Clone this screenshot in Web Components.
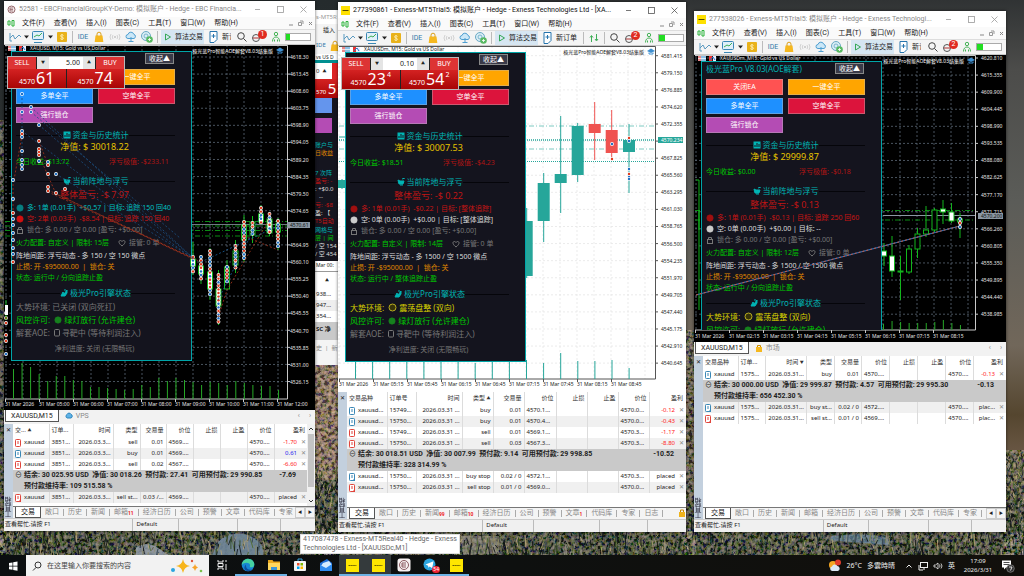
<!DOCTYPE html>
<html lang="zh-CN">
<head>
<meta charset="utf-8">
<title>Desktop</title>
<style>
html,body{margin:0;height:100%;overflow:hidden;background:#202423}
body{font-family:"Noto Sans","Noto Sans CJK SC",sans-serif;font-size:6px;line-height:11px;color:#222;--ui:Roboto,"Noto Sans CJK SC",sans-serif}
</style>
</head>
<body>
<desk-top>
  <desk-wallpaper slot="wallpaper"></desk-wallpaper>
  <mt-sliver slot="windows" class="back"></mt-sliver>
  <mt-window slot="windows" class="one" account="ebc"></mt-window>
  <mt-window slot="windows" class="two" account="exA"></mt-window>
  <mt-window slot="windows" class="three" account="exB"></mt-window>
  <task-tip slot="windows" class="tip">417087478 - Exness-MT5Real40 - Hedge - Exness<br>Technologies Ltd - [XAUUSDc,M1]</task-tip>
  <task-bar slot="bar"></task-bar>
</desk-top>
<script>
const BASE = `<style>
*{box-sizing:border-box}
button,input{font:inherit;color:inherit;background:none;border:0;padding:0;margin:0;outline:0;line-height:inherit;min-width:0}
button{white-space:nowrap}
svg{display:block;flex:none}
</style>`;
function define(name, render){
  customElements.define(name, class extends HTMLElement{
    connectedCallback(){
      if(this.shadowRoot) return;
      const t=document.createElement('template');
      t.innerHTML=BASE+render(this);
      this.attachShadow({mode:'open'}).append(t.content.cloneNode(true));
    }
  });
}
function random(seed){return ()=>{seed=(seed*1664525+1013904223)%4294967296;return seed/4294967296}}
const svg=(w,h,body,vb)=>`<svg width="${w}" height="${h}" viewBox="${vb||`0 0 ${w} ${h}`}" fill="none" aria-hidden="true">${body}</svg>`;

const ICON={
  line:svg(12,12,'<path d="M1 2v8h2M1 7l3-3 2 4 4-4 2 2" stroke="#5a9ac0"/>'),
  box:svg(14,14,'<rect x="1.5" y="1.5" width="11" height="8" rx="1" fill="#dff0fa" stroke="#3a87b5"/><path d="M3 7l3-2 2 1 3-3" stroke="#3fae57"/><path d="M3 12.5h8" stroke="#3a87b5"/>'),
  coin:svg(14,14,'<rect x="2" y="2" width="10" height="10" rx="1" fill="#e9b21a"/><path d="M8.500 5.500c-1-1.200-3-.8-3 .5s3 .8 3 2.200-2.500 1.600-3.200.3M7 4v6" stroke="#fff3c0" stroke-width=".8"/>'),
  bag:svg(14,14,'<path d="M3.500 5.500h7l.8 6.500H2.700z" fill="#f5b81f"/><path d="M5 6V4.200a2 2 0 014 0V6" stroke="#dba019"/>'),
  signal:svg(14,14,'<circle cx="7" cy="7" r="1" fill="#c5c5c5"/><path d="M5 5q-1.500 2 0 4M9 5q1.500 2 0 4M3 4q-2 3 0 6M11 4q2 3 0 6" stroke="#c9c9c9" stroke-width=".8"/>'),
  cloud:svg(14,14,'<path d="M4 8.500a2 2 0 010-4 3 3 0 015.800-.2A2.200 2.200 0 0110 8.500z" fill="#cbe7f7" stroke="#4f9fd0"/><path d="M7 7v4M4.500 11.500h5" stroke="#4f9fd0"/>'),
  globe:svg(14,14,'<circle cx="6" cy="6" r="4.500" fill="#d9edf5" stroke="#6aa9c4"/><circle cx="6" cy="6" r="2" stroke="#6aa9c4" stroke-width=".8"/><circle cx="9.500" cy="9.500" r="3.300" fill="#58b962"/><path d="M9.500 8v3M8 9.500h3" stroke="#fff" stroke-width=".8"/>'),
  play:svg(8,8,'<path d="M1.500 1l5 3-5 3z" stroke="#35a857"/>'),
  doc:svg(14,14,'<path d="M4 1.500h7v8l-3 3H4z" fill="#fff" stroke="#2674ad"/><path d="M7.500 4v4M5.500 6h4" stroke="#2674ad"/>'),
  arrows:svg(14,14,'<path d="M4.500 11V5M3 6.500L4.500 4.500 6 6.500M9.500 3v6M8 8l1.500 2L11 8" stroke="#3fae57"/>'),
  search:svg(14,14,'<circle cx="6" cy="6" r="3.300" stroke="#444"/><path d="M8.500 8.500l3 3" stroke="#444"/>'),
  person:svg(14,14,'<circle cx="7" cy="4" r="1.700" stroke="#45b356"/><path d="M3.500 11.500c0-3 1.500-4.500 3.500-4.500s3.500 1.500 3.500 4.500M5.500 11.500v-2M8.500 11.500v-2" stroke="#45b356"/>'),
  caret:svg(6,4,'<path d="M1 .5h5L3.500 3.500z" fill="#222"/>'),
  cap:svg(8,7,'<path d="M0 3l4-2.500L8 3 4 5z" fill="#3f8fd0"/><path d="M2 4.500v1.500h4V4.500" stroke="#3f8fd0"/>'),
  flags:svg(20,7,'<path d="M1 1h3v5H1z" fill="#e88"/><path d="M4 1h5v5H4z" fill="#8bc0e6"/><path d="M1 3.500h8" stroke="#fff" stroke-width=".7"/><path d="M12 1h3v5h-3z" fill="#e33"/><path d="M16 1h3v5h-3z" fill="#eef"/><path d="M13 5l3-3 2 3" stroke="#2674c4"/>')
};

const AXIS=(from,step,n,d)=>Array.from({length:n},(_,i)=>(from-step*i).toFixed(d));
const ACC={
 ebc:{
  title:'52581 - EBCFinancialGroupKY-Demo: 模拟账户 - Hedge - EBC Financia...',active:false,logo:'ebc',neworder:'新订单',compact:true,badge:1,
  x:4,y:45,w:311,h:365,border:287.5,base:399,dark:true,
  axis:AXIS(4618.30,4.85,20,2),axisPad:'9px 0 14px',tag:['4570.61',177],covered:10,tagBg:'#8b97a3',tagFg:'#111',
  dates:['31 Mar 2026','31 Mar 05:00','31 Mar 06:00','31 Mar 07:00','31 Mar 08:00','31 Mar 09:00','31 Mar 10:00','31 Mar 11:00','31 Mar 12:00'],datePad:'0 4px 0 1px',
  sym:'XAUUSD, M15: Gold vs US Dollar',tab:['XAUUSD,M15','VPS','cloud'],
  trade:{lot:'5.00',s:['4570','61',''],b:['4570','74','']},
  panel:{net:'30018.22',day:'$13.72',dd:'-$233.11',all:'-$ 7.97',
   long:['#00c0c0','#087f80','多: 1单 (0.01手)  +$0.57 | 目标: 追踪 150 回40'],short:['#c81414','#d01010','空: 2单 (0.03手)  -$8.54 | 目标: 追踪 150 回40'],
   lim:15,gap:'150',mode:'分向追踪止盈',env:['#777','已关闭 (双向死扛)',false]},
  cols:[36,24,40,27,26,27,27,27,27,34],scroll:true,list:82,
  heads:['交... ▲','订单...','时间','类型','交易量','价位','止损','止盈','价位','盈利'],
  rows:[['sell','xauusd','3851...','2026.03.3...','sell','0.01','4569....','4570....','-1.70'],['buy','xauusd','3851...','2026.03.3...','buy','0.01','4569....','4570....','0.61'],['sell','xauusd','3851...','2026.03.3...','sell','0.02','4567....','4570....','-6.60'],
   ['结余: 30 025.95 USD  净值: 30 018.26  预付款: 27.41  可用预付款: 29 990.85','预付款维持率: 109 515.58 %','-7.69'],
   ['sellp','xauusd','3851...','2026.03.3...','sell st...','0.03 /...','4569....','4570....','placed']],
  tabs:['交易','敞口','历史','新闻','邮箱:11','经济日历','公司','预警','文章','代码库','专家'],arrows:true
 },
 exA:{
  title:'277390861 - Exness-MT5Trial5: 模拟账户 - Hedge - Exness Technologies Ltd - [XA...',active:true,logo:'ex',neworder:'新订单',badge:2,
  x:338,y:46,w:348,h:346,border:655.5,base:379,dark:false,
  axis:AXIS(4581.415,2.265,19,3),axisPad:'7px 0 13px',tag:['4570.234',91],covered:5,tagBg:'#26a69a',tagFg:'#fff',
  dates:['31 Mar 2026','31 Mar 05:15','31 Mar 05:45','31 Mar 06:15','31 Mar 06:45','31 Mar 07:15','31 Mar 07:45','31 Mar 08:15','31 Mar 08:45'],datePad:'0 41px 0 1px',
  sym:'XAUUSDm, M15: Gold vs US Dollar',
  trade:{lot:'0.10',s:['4570','23','4'],b:['4570','54','2']},
  panel:{net:'30007.53',day:'$18.51',dd:'-$4.23',all:'-$ 0.22',
   long:['#c81414','#a01010','多: 1单 (0.01手)  -$0.22 | 目标: [整体追踪]'],short:['#ddd','#ccc','空: 0单 (0.00手)  +$0.00 | 目标: [整体追踪]'],
   lim:14,gap:'1500',mode:'整体追踪止盈',env:['#d8d000','震荡盘整 (双向)',true]},
  cols:[40,29,46,31,31,32,31,31,31,37],list:115,
  heads:['交易品种','订单号','时间','类型  ▲','交易量','价位','止损','止盈','价位','盈利'],
  rows:[['buy','xauusd...','15749...','2026.03.31 ...','buy','0.01','4570.1...','4570.0...','-0.12'],['buy','xauusd...','15750...','2026.03.31 ...','buy','0.01','4570.4...','4570.0...','-0.43'],['sell','xauusd...','15749...','2026.03.31 ...','sell','0.01','4569.1...','4570.3...','-1.17'],['sell','xauusd...','15750...','2026.03.31 ...','sell','0.03','4567.3...','4570.3...','-8.80'],
   ['结余: 30 018.51 USD  净值: 30 007.99  预付款: 9.14  可用预付款: 29 998.85','预付款维持率: 328 314.99 %','-10.52'],
   ['buyp','xauusd...','15750...','2026.03.31 ...','buy stop','0.02 / 0','4572.1...','4570.3...','placed'],['sellp','xauusd...','15750...','2026.03.31 ...','sell stop','0.01 / 0','4569.0...','4570.0...','placed']],
  tabs:['交易','敞口','历史','新闻:99','邮箱:10','经济日历','公司','预警','文章:1','代码库','专家','日志'],lock:true
 },
 exB:{
  title:'277538026 - Exness-MT5Trial5: 模拟账户 - Hedge - Exness Technologi...',active:false,logo:'ex',neworder:'新订单',compact:true,badge:2,
  x:694,y:55,w:312,h:287,border:975.5,base:330,dark:true,
  axis:AXIS(4620.810,5.455,16,3),axisPad:'0 0 13px',tag:['4570.200',158],tagBg:'#8b97a3',tagFg:'#111',
  dates:['31 Mar 2026','31 Mar 02:15','31 Mar 03:15','31 Mar 04:15','31 Mar 05:15','31 Mar 06:15','31 Mar 07:15','31 Mar 08:15'],datePad:'0 39px 0 1px',
  sym:'XAUUSDm, M15: Gold vs US Dollar',tab:['XAUUSD,M15','市场','bag'],
  panel:{net:'29999.87',day:'$0.00',dd:'-$0.18',all:'-$ 0.13',short_view:true,
   long:['#c81414','#a01010','多: 1单 (0.01手)  -$0.13 | 目标: 追踪 250 回60'],short:['#ddd','#ccc','空: 0单 (0.00手)  +$0.00 | 目标: --'],
   lim:12,gap:'1500',mode:'分向追踪止盈',env:['#d8d000','震荡盘整 (双向)',true]},
  cols:[35,27,41,28,27,28,28,28,28,32],list:151,
  heads:['交易品种','订单...','时间  ▼','类型','交易量','价位','止损','止盈','价位','盈利'],
  rows:[['buy','xauusd','1575...','2026.03.31...','buy','0.01','4570....','4570....','-0.13'],
   ['结余: 30 000.00 USD  净值: 29 999.87  预付款: 4.57  可用预付款: 29 995.30','预付款维持率: 656 452.30 %','-0.13'],
   ['buyp','xauusd','1575...','2026.03.31...','buy st...','0.02 / 0','4572....','4570....','plac...'],['sellp','xauusd','1575...','2026.03.31...','sell st...','0.01 / 0','4569....','4570....','plac...']],
  tabs:['交易','敞口','历史','新闻','邮箱','经济日历','公司','预警','文章','代码库','专家'],arrows:true
 }
};

/* Plot drawings: one layer behind the strategy panel, one above it. */
const dot=(x,y,c)=>`<circle cx="${x}" cy="${y}" r="1.900" fill="#fff"/><circle cx="${x}" cy="${y}" r="1.200" fill="${c}"/>`;
const R='#e03a1c',B='#1f6fc4';
function grid(a,x0,y0){
  let s='',c=a.dark?'#5c6876':'#e6e6e6',ax=a.dark?'#c8c8c8':'#555';
  for(let x=x0;x<a.border;x+=17) s+=`<path d="M${x} ${a.y}V${a.base}" stroke="${c}" stroke-width=".8" stroke-dasharray="2 2"/>`;
  for(let i=0;i<a.axis.length;i++){const y=y0+i*17.08;s+=`<path d="M${a.x+1} ${y}H${a.border}" stroke="${c}" stroke-width=".8" stroke-dasharray="2 2"/><path d="M${a.border} ${y}h2.500" stroke="${ax}"/>`}
  s+=`<path d="M${a.x+1} ${a.y+.5}H${a.border}V${a.base}H${a.x+1}" stroke="${ax}"/>`;
  for(let i=0;i<a.dates.length;i++) s+=`<path d="M${a.x+1.5+34*i} ${a.base}v3" stroke="${ax}"/>`;
  return s;
}
const LAYERS={
 ebc(a){
  let s=grid(a,6,57),t='';
  [369,363,367,374,381,376,376,380,381,387,387,388,389,390,389,385,387,378,381,378,380,382,385,382,383,385,381,383,385,386,386,390].forEach((y,i)=>s+=`<path d="M${13.500+8.550*i} ${y}V399" stroke="#27a827"/>`);
  s+='<path d="M5 221.500H287M5 230.500H287M5 236H287M5 226H287" stroke="#0b8a14" stroke-dasharray="5 2 1 2"/><path d="M192 224.500H287" stroke="#8b97a3" stroke-width=".8"/>';
  const cl=[[193,257,272,242,275],[201,257,282,255,284],[210,251,297,248,300],[218.500,275,323,270,325],[227,267,285,260,290],[235.500,246,270,240,273],[244,222,259,215,262],[252.500,223,237,216,243],[261,208,223,205,225],[269.500,214,234,212,236],[278,221,247,218,250]];
  const bod=[[259,266,1],[266,274,1],[272,289,1],[289,306,1],[267,289,0],[251,265,0],[225,240,0],[222,235,0],[214,222,1],[219,233,1],[224,232,0]];
  const r=random(7);
  cl.forEach(([x,y1,y2,w1,w2],i)=>{
    const [b1,b2,f]=bod[i];
    t+=`<path d="M${x} ${w1}V${w2}" stroke="#12b51c"/><rect x="${x-2.5}" y="${b1}" width="5" height="${b2-b1}" fill="${f?'#fff':'#000'}" stroke="#12b51c"/>`;
    for(let y=y1;y<=y2;y+=3.6) t+=dot(x,y,r()<.55?R:B);
  });
  t+=`<g stroke-width=".8" stroke-dasharray="2 2"><path d="M22 94L22 167M31 107L193 258M39 125L193 258M22 131L193 259M31 112L180 238M56 174L193 258" stroke="#1b4f82"/><path d="M39 141L48 165M48 192L193 258M39 155L56 194L193 259M13 180L13 262M22 135L14 180M48 190L201 262M269 220L227 290L218 318M244 236L278 250" stroke="#a8341c"/><path d="M201 262L278 226M218 300L261 215" stroke="#1b5f9e"/></g>`;
  [[22,94,1],[22,112,1],[31,107,1],[31,112,1],[39,125,1],[22,131,1],[22,134,0],[22,137,1],[39,141,0],[39,149,0],[39,152,0],[39,155,0],[39,161,1],[22,151,1],[22,160,1],[22,165,1],[22,169,1],[48,162,1],[48,165,0],[48,174,0],[56,174,1],[48,187,0],[48,191,0],[56,193,0],[65,189,0],[13,180,1],[13,199,1],[13,213,0],[13,219,1],[13,225,1],[13,233,1],[13,240,1],[13,248,1],[13,254,1],[13,262,0],[6,313,1],[6,318,0],[6,323,0],[6,335,0],[6,341,0],[6,354,1]].forEach(p=>t+=dot(p[0],p[1],p[2]?B:R));
  t+='<path d="M6 300v20" stroke="#12b51c"/><rect x="5" y="305" width="3" height="10" fill="#fff"/>';
  return [s,t];
 },
 exA(a){
  let s=grid(a,339,55.7);
  [361,361,361,361,361,361,361,363,361,361,360,363,353,361,361,360,368].forEach((y,i)=>s+=`<path d="M${355.5+17.1*i} ${y}V379" stroke="#26a69a"/>`);
  s+='<path d="M339 126H655" stroke="#7cc9c1" stroke-dasharray="5 2 1 2"/><path d="M339 140H655" stroke="#26a69a" stroke-width="1.500" stroke-dasharray="1 1"/><path d="M339 149H655" stroke="#7cc9c1" stroke-dasharray="5 2 1 2"/><path d="M339 161.500H655" stroke="#26a69a" stroke-dasharray="1 1"/><path d="M339 137h6" stroke="#26a69a"/>';
  [[342,180,188,179,189,1],[526.7,221,276,208,278,1],[543.7,183,221,173,242,1],[560.7,174,183,116,213,1],[577.7,126,175,123,182,1],[594.7,124,133,102,160,0],[611.7,130,153,110,158,0],[629,140,152,124,193,1]].forEach(([x,a1,b1,w1,w2,up])=>{const c=up?'#26a69a':'#ef5350';s+=`<path d="M${x} ${w1}V${w2}" stroke="${c}"/><rect x="${x-6}" y="${a1}" width="12" height="${b1-a1}" fill="${c}"/>`});
  return [s,[[612,144,1],[612,159,0],[629,138,0],[629,141,1],[629,169,1],[629,174,0],[629,177,1],[629,179,1]].map(p=>dot(p[0],p[1],p[2]?B:R)).join('')];
 },
 exB(a){
  let s=grid(a,696,58);
  s+='<path d="M695 210.500H975M695 220H975" stroke="#0b8a14" stroke-dasharray="5 2 1 2"/><path d="M883 215.500H975" stroke="#8b97a3"/>';
  [324,321,322,323,323,323,322,320,323,325].forEach((y,i)=>s+=`<path d="M${883.500+8.550*i} ${y}V330" stroke="#27a827"/>`);
  [[884,251,256,243,266,1],[892,256,271,236,277,1],[900.5,271,272,256,300,1],[909,249,272,245,274,0],[917.5,234,249,228,258,0],[926,230,234,206,237,0],[934.5,210,230,208,232,0],[943,209,212,200,224,1],[951.5,212,221,203,223,1],[960,219,222,213,238,0]].forEach(([x,a1,b1,w1,w2,f])=>s+=`<path d="M${x} ${w1}V${w2}" stroke="#12b51c"/><rect x="${x-2.5}" y="${a1}" width="5" height="${b1-a1}" fill="${f?'#fff':'#000'}" stroke="#12b51c"/>`);
  s+='<path d="M696 180h3v130M699 210v20" stroke="#12b51c"/>';
  return [s,'<path d="M696 295L960 226" stroke="#2a6fb4" stroke-width="1.200"/><path d="M696 295L960 226" stroke="#d2553a" stroke-dasharray="2 2"/>'+dot(960,219,B)+dot(960,223,R)+dot(960,227,B)];
 }
};

define('desk-top',()=>`<style>
:host{display:grid;height:100vh;grid-template-rows:1fr 21px;overflow:hidden;position:relative}
.paper{grid-area:1/1/-1/-1;display:grid;overflow:hidden}
/* window placement on the desktop, in shares of its width */
.canvas{grid-area:1/1;display:grid;grid-template-columns:4fr 296fr 15fr 23fr 122fr 226fr 8fr 312fr 18fr;align-items:start;min-height:0;min-width:0}
.bar{grid-area:2/1;display:grid;min-width:0}
::slotted(.back){grid-area:1/4;margin-top:10px}
::slotted(.one){grid-area:1/2/2/4;margin-top:1px}
::slotted(.two){grid-area:1/5/2/7;margin-top:2px}
::slotted(.three){grid-area:1/8;margin-top:11px}
::slotted(.tip){grid-area:1/3/2/6;margin-top:534px}
::slotted(mt-window),::slotted(mt-sliver){min-width:0}
</style><div class="paper"><slot name="wallpaper"></slot></div><div class="canvas"><slot name="windows"></slot></div><div class="bar"><slot name="bar"></slot></div>`);

define('desk-wallpaper',()=>{
  const r=random(41);let g='';
  const cols=['#8f8a5c','#b8a67a','#4f6a2c','#2c451a','#11160f','#5f563e','#93907f','#0c1113','#33434f','#10181b'];
  for(let i=0;i<1900;i++){const x=r()*1024,y=527+r()*52,c=cols[Math.floor(r()*cols.length)];g+=`<path d="M${x.toFixed(1)} ${y.toFixed(1)}l${(r()*6-3).toFixed(1)} ${(-3-r()*10).toFixed(1)}" stroke="${c}"/>`}
  for(let i=0;i<350;i++){const x=r()<.5?1004+r()*20:315+r()*24,y=(x>900?455:470)+r()*80,c=cols[Math.floor(r()*cols.length)];g+=`<path d="M${x.toFixed(1)} ${y.toFixed(1)}l${(r()*6-3).toFixed(1)} ${(-2-r()*6).toFixed(1)}" stroke="${c}"/>`}
  return `<style>:host{display:block;overflow:hidden;min-height:0}svg{width:100%;height:100%}</style>
  <svg viewBox="0 0 1024 576" preserveAspectRatio="xMidYMid slice" fill="none" aria-hidden="true"><defs>
  <linearGradient id="s" x2="0" y2="1"><stop offset="0" stop-color="#303334"/><stop offset=".12" stop-color="#4c4c4a"/><stop offset=".35" stop-color="#5b5c58"/><stop offset=".6" stop-color="#71675a"/><stop offset=".72" stop-color="#55462f"/><stop offset=".8" stop-color="#6d5a48"/><stop offset="1" stop-color="#242a1f"/></linearGradient>
  <linearGradient id="l" x2="0" y2="1"><stop offset="0" stop-color="#252b2d"/><stop offset=".6" stop-color="#363735"/><stop offset="1" stop-color="#242a24"/></linearGradient>
  <filter id="n" x="0" y="0" width="1" height="1"><feTurbulence type="fractalNoise" baseFrequency=".28" numOctaves="3" seed="8"/><feColorMatrix values="1.600 0 0 0 -.62  1.200 .4 0 0 -.62  .9 0 .6 0 -.62  0 0 0 0 .55"/></filter></defs>
  <rect width="1024" height="576" fill="url(#s)"/><rect width="400" height="576" fill="url(#l)"/>
  <rect x="312" y="360" width="30" height="120" fill="#a87c68"/>
  <rect y="500" width="1024" height="76" fill="#2b3226"/>
  <rect x="0" y="120" width="5" height="456" filter="url(#n)"/><rect x="312" y="360" width="30" height="216" filter="url(#n)"/><rect x="684" y="330" width="12" height="246" filter="url(#n)"/><rect x="1004" y="450" width="20" height="126" filter="url(#n)"/><rect y="528" width="1024" height="48" filter="url(#n)"/>
  <path d="M212 556q4-20 22-22 18-2 28 12l2 10z" fill="#71879a" opacity=".9"/><path d="M136 548q10-8 22 0l12 8h-34z" fill="#95a0ae" opacity=".8"/><path d="M832 536q40-5 58 4l-2 5-60-5z" fill="#7797b4" opacity=".6"/><path d="M461 536h38v18h-36z" fill="#a39a90" opacity=".55"/>
  <g opacity=".85">${g}</g></svg>`;
});

define('mt-window',el=>{const k=el.getAttribute('account'),a=ACC[k];
 const logo=a.logo==='ex'?svg(9,9,'<rect width="9" height="9" fill="#fee000"/><path d="M1.500 4.500h6" stroke="#554a00"/>'):svg(9,9,'<circle cx="4.500" cy="4.500" r="3.500" fill="#f4e9e9" stroke="#93666a"/><path d="M3 3h3M3 4.500h3M3 6h3M3 3v3" stroke="#93666a" stroke-width=".8"/>');
 const b=(i,l,c='')=>`<button class="${c}" aria-label="${l}">${ICON[i]}</button>`;
 return `<style>
 :host{display:flex;flex-direction:column;background:#f0f0f0;box-shadow:0 0 3px #0009}
 header{height:16px;background:#fff;display:flex;align-items:center;padding-left:3px;gap:3px;color:${a.active?'#111':'#888'}}
 h1{font:7px/16px var(--ui);margin:0;flex:1;white-space:nowrap;overflow:hidden;min-width:0}
 header div{display:flex;color:${a.active?'#555':'#999'};margin-left:-2px}
 header button{width:23px;height:16px;display:grid;place-items:center}
 nav{height:12px;background:#fafafa;display:flex;align-items:center;padding:0 1px 0 3px;gap:9px;font:7px/12px var(--ui)}
 nav .g{margin-right:-2px}.mdi{margin-left:auto;display:flex;gap:3px}
 .tools{height:16px;display:flex;align-items:center;gap:2px;padding:0 4px 0 5px;border-top:1px solid #ddd;border-bottom:1px solid #c8c8c8;background:#f4f4f4;overflow:hidden;font:7px/14px var(--ui)}
 .tools>*{flex:none}.sep{width:1px;height:12px;margin:0 1px;background:#bbb}
 .ide{width:14px;color:#2f77a8;text-align:center}.algo{width:43px;height:14px;background:#d6e6f2;display:flex;align-items:center;gap:3px;padding-left:3px}
 .new{width:${a.compact?9:22}px;overflow:hidden;text-align:left}.tools .push{flex:1}
 .alert{position:relative;width:16px;height:14px;display:grid;place-items:center start}
 .alert span{position:absolute;right:0;top:0;width:9px;height:9px;border-radius:5px;background:#e02b20;color:#fff;line-height:9px;text-align:center}
 .meter{width:26px;height:8px;border:1px solid #aaa;background:#fff}.meter i{display:block;width:${a.logo==='ex'?6:4}px;height:6px;background:#22dd22}
 .tabs{height:14px;display:flex;align-items:stretch;padding:0 4px 2px 1px;gap:6px;color:#888;background:#f2f2f2;font:7px/11px var(--ui)}
 .tabs .on{background:#fff;color:#222;border:1px solid #555;border-top:0;padding:0 5px;line-height:10px}.tabs button{display:flex;align-items:center;gap:3px}
 .tabs .end{margin-left:auto;gap:9px}
 .status{height:13px;display:flex;border-top:1px solid #ccc;background:#f0f0f0;line-height:11px;padding-left:1px}
 .status span{border-right:1px solid #bbb;padding-right:2px;flex-basis:0}.status span:nth-child(1){flex-grow:134}.status span:nth-child(2){flex-grow:42;padding-left:3px}.status span:nth-child(3){flex-grow:60}.status span:nth-child(4){flex-grow:43}.status span:nth-child(5){flex-grow:34;border:0}
 </style>
 <header>${logo}<h1>${a.title}</h1><div><button aria-label="最小化">${svg(7,7,`<path d="M1 3.500h5" stroke="currentColor" stroke-width=".8"/>`)}</button><button aria-label="最大化">${svg(7,7,`<rect x=".5" y=".5" width="6" height="6" stroke="currentColor" stroke-width=".8"/>`)}</button><button aria-label="关闭">${svg(7,7,`<path d="M.5.5l6 6M6.500.5l-6 6" stroke="currentColor" stroke-width=".8"/>`)}</button></div></header>
 <nav><span class="g">${svg(8,8,'<path d="M1 2h2v4H1zM5 1.500h2V7H5z" stroke="#2bb33a"/>')}</span>${['文件(F)','查看(V)','插入(I)','图表(C)','工具(T)','窗口(W)','帮助(H)'].map(m=>`<button>${m}</button>`).join('')}<span class="mdi">${svg(7,7,'<path d="M2 5h4" stroke="#888"/>')}${svg(7,7,'<path d="M1.500 2.500h3v3h-3zM3 1h3v3" stroke="#999"/>')}${svg(7,7,'<path d="M2 2l3 3M5 2L2 5" stroke="#888"/>')}</span></nav>
 <div class="tools">${b('line','线图')}${b('caret','更多')}${b('box','模板')}${b('caret','更多')}${b('coin','品种')}<i class="sep"></i><button class="ide">IDE</button>${b('bag','市场')}${b('signal','信号')}${b('cloud','VPS')}${b('globe','社区')}<i class="sep"></i><button class="algo">${ICON.play}算法交易</button>${b('doc','订单')}<button class="new">${a.neworder}</button><span class="push"></span>${a.compact?'':`<i class="sep"></i>${b('arrows','深度')}<i class="sep"></i>`}${b('search','搜索')}<button class="alert" aria-label="通知">${svg(12,12,'<circle cx="5" cy="7" r="3.500" stroke="#555"/><path d="M2 7h6" stroke="#a33"/>')}<span>${a.badge}</span></button>${b('person','账户')}<span class="meter"><i></i></span></div>
 <mt-chart account="${k}"><mt-panel slot="panel" account="${k}"></mt-panel>${a.trade?`<mt-trade slot="trade" account="${k}"></mt-trade>`:''}</mt-chart>
 ${a.tab?`<div class="tabs"><button class="on">${a.tab[0]}</button><button>${a.tab[2]==='cloud'?svg(8,8,'<path d="M2 6a2 2 0 010-3.500 2.200 2.200 0 014-.2A2 2 0 016 6z" fill="#5fb2e6" stroke="#2f86bd"/>'):svg(8,8,'<path d="M1 3h6v5H1z" fill="#f5b81f"/><path d="M2.500 3V1.500h3V3" stroke="#c88a00"/>')}${a.tab[1]}</button><button class="end"><span>‹</span><span>›</span></button></div>`:''}
 <mt-toolbox account="${k}"></mt-toolbox>
 <div class="status"><span>查看帮忙,请按 F1</span><span>Default</span><span></span><span></span><span></span></div>`;
});

define('mt-chart',el=>{const k=el.getAttribute('account'),a=ACC[k],[s,t]=LAYERS[k](a),foot=a.h-(a.base-a.y);
 const layer=(x,c)=>`<svg class="${c}" viewBox="${a.x} ${a.y} ${a.w} ${a.h}" preserveAspectRatio="none" fill="none" aria-hidden="true">${x}</svg>`;
 return `<style>
 :host{display:grid;position:relative;overflow:hidden;height:${a.h}px;grid-template:minmax(0,1fr) ${foot}px/minmax(0,1fr) 28px;background:${a.dark?'#000':'#fff'};color:${a.dark?'#e6e6e6':'#222'};font-size:5px;line-height:6px}
 svg.all{grid-area:1/1/-1/-1;width:100%;height:100%;min-height:0}
 .over{z-index:2;pointer-events:none}
 .clip{position:absolute;inset:0 0 ${foot}px 0;overflow:hidden;z-index:1;pointer-events:none}
 .clip ::slotted(*){pointer-events:auto}
 .axis{grid-area:1/2;display:flex;flex-direction:column;justify-content:space-between;padding:${a.axisPad};padding-left:3px;position:relative}
 .axis .hid{visibility:hidden}
 .tag{position:absolute;left:0;top:${a.tag[1]}px;background:${a.tagBg};color:${a.tagFg};padding:0 1px 0 3px}
 .dates{grid-area:2/1/3/3;display:flex;padding:${a.datePad};align-items:${foot>12?'start':'center'};line-height:11px}
 .dates span{flex:1 1 0;white-space:nowrap;min-width:0}
 .cap{grid-area:1/1;display:flex;gap:3px;padding:0 3px;align-items:start;height:7px}
 .cap b{font-weight:400;margin-left:auto;color:${a.dark?'#fff':'#111'};white-space:nowrap;padding-top:3px}.cap>svg:last-child{margin-top:2px}
 .cap span{white-space:nowrap}
 </style>${layer(s,'all')}<div class="cap">${ICON.flags}<span>${a.sym}</span><b>极光蓝Pro智能AOE解套V8.03结集版</b>${ICON.cap}</div>
 <div class="axis">${a.axis.map((v,i)=>`<span class="${i===a.covered?'hid':''}">${v}</span>`).join('')}<span class="tag">${a.tag[0]}</span></div>
 <div class="dates">${a.dates.map(v=>`<span>${v}</span>`).join('')}</div><div class="clip"><slot name="panel"></slot></div>${layer(t,'all over')}<slot name="trade"></slot>`;
});

define('mt-panel',el=>{const acc=ACC[el.getAttribute('account')],p=acc.panel;
 const cy='#00b4b4';
 const ic=[svg(8,8,`<rect x=".5" y=".5" width="7" height="7" fill="${cy}"/><path d="M2 6V4M4 6V2M6 6V3" stroke="#14141e"/>`),svg(8,8,`<path d="M1 2l2 1h4l-1 3H2zM3 7h3M5 1l3-1" fill="${cy}" stroke="${cy}"/>`),svg(8,8,`<path d="M1 7l2-4 1 2 3-4v3L5 7zM4 1h2" fill="${cy}" stroke="${cy}"/>`)];
 const h=(i,t,c='')=>`<h2 class="${c}"><span>${ic[i]}${t}</span></h2>`;
 const ball=(c)=>svg(8,8,`<circle cx="4" cy="4" r="3.200" fill="${c}" stroke="${c}" stroke-opacity=".6"/>`);
 return `<style>
 :host{display:block;position:absolute;left:7px;top:6px;width:181px;height:310px;background:#14141e;border:1px solid #00a5a8;font-size:7px;line-height:11px;padding:0 16px 0 4px;color:#ddd;white-space:nowrap}
 .top{display:flex;justify-content:space-between;height:13px;align-items:center;font-size:8px;color:#00b4b4;margin-right:1px}
 .top button{background:#3a3a48;border:1px solid #888;color:#fff;height:11px;line-height:9px;font-size:7px;padding:0 3px}
 ${acc.trade?'.top span,.btns button:first-child{visibility:hidden}':''}
 .btns{display:grid;grid-template-columns:1fr 1fr;gap:3px 5px;margin-top:4px}
 .btns button{height:16px;line-height:14px;color:#fff;border:1px solid #bbb6;font-size:7px}
 h2{font-size:8px;font-weight:400;color:#00b4b4;margin:8px 0 0;line-height:12px;height:12px;display:flex;align-items:center}h2.a{margin-top:6px}h2.b{margin-top:4px}
 h2:before,h2:after{content:"";flex:1;border-top:1px solid #05050a}h2 span{display:flex;gap:2px;align-items:center}
 .net{font-size:9px;line-height:12px;height:12px;color:#e6c200;text-align:center}
 .pair{display:grid;grid-template-columns:93px 1fr;line-height:10px;margin-top:4px;color:#b01414}
 .all{font-size:9px;line-height:12px;height:12px;margin-top:2px;color:#c01414;text-align:center}
 .r{display:flex;gap:3px;align-items:center;height:11px;white-space:pre}.r.s{margin-top:2px}
 .gr{color:#00c800}.or{color:#e08a00}.dim{color:#777}.r .dim{margin-left:6px}
 .big{font-size:8px;line-height:13px;height:13px;display:flex;align-items:center;gap:2px;white-space:pre}
 .foot{margin-top:4px;text-align:center;color:#777}
 .net,.all,.foot{margin-right:2px}
 </style>
 <div class="top"><span>极光蓝Pro V8.03(AOE解套)</span><button>收起▲</button></div>
 <div class="btns"><button style="background:#ff5252">关闭EA</button><button style="background:#ffa500">一键全平</button><button style="background:#1e90ff">多单全平</button><button style="background:#dc143c">空单全平</button><button style="background:#b44cb4">强行锁仓</button></div>
 ${h(0,'资金与历史统计','a')}<div class="net">净值: $ ${p.net}</div>
 <div class="pair"><span class="gr">今日收益: ${p.day}</span><span>浮亏极值: ${p.dd}</span></div>
 ${h(1,'当前阵地与浮亏')}<div class="all">整体盈亏: ${p.all}</div>
 <div class="r" style="color:${p.long[0]};margin-top:1px">${ball(p.long[1])}${p.long[2]}</div>
 <div class="r" style="color:${p.short[0]}">${ball(p.short[1])}${p.short[2]}</div>
 <div class="r dim">${svg(8,8,'<rect x="1.500" y="3.500" width="5" height="4" stroke="#777"/><path d="M2.500 3V1.500h3V3" stroke="#777"/>')}锁仓: 多 0.00 / 空 0.00 [盈亏: +$0.00]</div>
 <div class="r s gr">火力配置: 自定义 | 限制: ${p.lim}层<span class="dim r">${svg(8,8,'<path d="M4 7C0 4 .5 1.500 2.500 1.500 3.500 1.500 4 2.500 4 2.500s.5-1 1.500-1C7.500 1.500 8 4 4 7z" stroke="#777"/>')}接管: 0 单</span></div>
 <div class="r s">阵地间距: 浮亏动态 - 多 ${p.gap} / 空 ${p.gap} 微点</div>
 <div class="r or">止损: 开 -$95000.00  |  锁仓: 关</div>
 <div class="r gr">状态: 运行中 / ${p.mode}</div>
 ${h(2,'极光Pro引擎状态','b')}
 <div class="big" style="color:${p.env[0]};margin-top:1px">大势环境: ${p.env[2]?svg(9,9,'<circle cx="4.500" cy="4.500" r="3.500" fill="#38340a" stroke="#b8ac20"/>'):''}${p.env[1]}</div>
 <div class="big gr">风控许可: ${ball('#16801e')}绿灯放行 (允许建仓)</div>
 ${p.short_view?'':`<div class="big dim">解套AOE: ${svg(6,9,'<rect x=".5" y="1.500" width="5" height="6.500" rx="1" stroke="#777"/>')}寻靶中 (等待利润注入)</div>
 <div class="foot">净利进度: 关闭 (无限畅玩)</div>`}`;
});

define('mt-trade',el=>{const t=ACC[el.getAttribute('account')].trade;
 const q=p=>`<button class="q">${p[0]}<b>${p[1]}</b>${p[2]?`<sup>${p[2]}</sup>`:''}</button>`;
 return `<style>:host{position:absolute;left:3px;top:11px;z-index:3;width:118px;display:grid;grid-template-columns:28px 1fr 28px;gap:0 1px;background:#222;border:1px solid #b9b9b9;color:#fff;font-size:7px}
 .s{background:#dd3434;height:12px;line-height:12px}.lot{display:flex;background:#fff;color:#222;line-height:12px;font-size:7px;min-width:0}
 .lot button{width:12px;background:#e4e4e4;font-size:4px}.lot input{flex:1;width:0;text-align:right;padding-right:3px;height:12px}
 .low{grid-column:1/-1;display:grid;grid-template-columns:1fr 1fr;gap:1px}
 .q{height:19px;background:linear-gradient(#d42222,#a80505);display:flex;justify-content:center;align-items:flex-end;line-height:12px;gap:1px}
 .q b{font-weight:400;font-size:16px;line-height:19px}.q sup{align-self:start;font-size:7px;line-height:9px}
 </style><button class="s">SELL</button><div class="lot"><button aria-label="减少">▼</button><input aria-label="手数" value="${t.lot}"><button aria-label="增加">▲</button></div><button class="s">BUY</button><div class="low">${q(t.s)}${q(t.b)}</div>`;
});

define('mt-toolbox',el=>{const a=ACC[el.getAttribute('account')];
 const doc=k=>{const c=k.startsWith('sell')?'#e0453c':'#3a87b5';return svg(6,8,`<rect x=".5" y=".5" width="5" height="7" rx=".8" fill="#fff" stroke="${c}"/><path d="M3 2v3" stroke="${c}"/>${k.endsWith('p')?`<path d="M6 5v3H3z" fill="${c}"/>`:''}`)};
 let n=0;
 const rows=a.rows.map(r=>{
  if(r.length===3) return `<tr class="sum"><td colspan="9"><div><i>⊖</i><span>${r[0]}<br>${r[1]}</span></div></td><td>${r[2]}</td></tr>`;
  const v=r[8],c=/^-/.test(v)?'#ff2020':/^0/.test(v)?'#2020ee':'#222';
  return `<tr class="${n++%2?'z':''}"><td class="l"><div>${doc(r[0])}${r[1]}</div></td><td class="l">${r[2]}</td><td>${r[3]}</td><td>${r[4]}</td><td>${r[5]}</td><td class="l">${r[6]}</td><td></td><td></td><td class="l">${r[7]}</td><td class="p" style="color:${c}">${v}<i>✕</i></td></tr>`}).join('');
 return `<style>
 :host{display:grid;grid-template:minmax(${a.list}px,auto) 12px/9px minmax(0,1fr) auto;background:#fff}
 .gut{grid-area:1/1/3/2;background:#c3d0de;display:flex;flex-direction:column;justify-content:space-between;align-items:center;color:#222}
 .gut button{line-height:12px}.gut span{writing-mode:vertical-rl;line-height:9px;font-size:7px;color:#334;transform:rotate(180deg)}
 .list{grid-area:1/2;overflow:hidden}
 table{width:100%;border-collapse:collapse;table-layout:fixed}
 th,td{font-weight:400;padding:0 2px;height:11px;text-align:right;white-space:nowrap;overflow:hidden;border-right:1px solid #dcdcdc;line-height:11px}
 th{height:13px;color:#333}th:last-child{padding-right:3px}td.l,th.l{text-align:left}td:last-child,th:last-child{border-right:0}
 td div{display:flex;align-items:center;gap:3px}.z td{background:#f0f0f0}
 .p i{font-style:normal;color:#888;margin-left:4px}
 .sum td{background:#c9c9c9;font:700 7px/11px var(--ui);border:0;vertical-align:top;overflow:visible}.sum div{align-items:start;text-align:left}.sum i{font-style:normal;font-weight:400;width:6px}.sum span{white-space:pre}
 .sum td:last-child{padding-right:12px}
 .scroll{grid-area:1/3;width:8px;background:#f0f0f0;display:flex;flex-direction:column;justify-content:space-between;align-items:center;padding:3px 0}
 .scroll i{flex:1;width:6px;margin:3px 0 12px;background:#c4c4c4}
 .tabs{grid-area:2/2/3/4;display:flex;background:#f4f4f4;border-top:1px solid #777;overflow:hidden;color:#888;font:7px/11px var(--ui)}
 .tabs>*{flex:none}.tabs .strip{flex:1;min-width:0;display:flex;overflow:hidden}
 .strip button{padding:0 5px 0 4px;position:relative;display:flex;line-height:10px;flex:none}.strip button+button:after{content:"";position:absolute;right:0;top:2px;height:7px;border-right:1px solid #aaa}
 .strip .on{background:#fff;color:#111;border:1px solid #555;border-top:0;padding:0 5px;margin-left:2px}
 .strip b{color:#e22;line-height:13px;font-size:5px}.ar{width:10px;color:#222;border:1px solid #ccc;font-size:4px;line-height:8px}
 </style>
 <div class="gut"><button aria-label="关闭">✕</button><span>工具箱</span></div>
 <div class="list"><table><colgroup>${a.cols.map(w=>`<col style="width:${w}px">`).join('')}</colgroup><thead><tr>${a.heads.map((t,i)=>`<th class="${i<2?'l':''}">${t.replace(/[▲▼]/,'<small style="font-size:4px">$&</small>')}</th>`).join('')}</tr></thead><tbody>${rows}</tbody></table></div>
 ${a.scroll?`<div class="scroll">${svg(6,4,'<path d="M1 3l2-2 2 2" stroke="#333"/>')}<i></i>${svg(6,4,'<path d="M1 1l2 2 2-2" stroke="#333"/>')}</div>`:''}
 <div class="tabs"><div class="strip">${a.tabs.map((t,i)=>{const [x,y]=t.split(':');return `<button class="${i?'':'on'}">${x}${y?`<b>${y}</b>`:''}</button>`}).join('')}</div>${a.arrows?'<button class="ar">◀</button><button class="ar">▶</button>':''}${a.lock?svg(8,9,'<path d="M1 4h6v5H1z" fill="#f0b41c"/><path d="M2.500 4V2h3v2" stroke="#c88a00"/>'):''}</div>`;
});

define('mt-sliver',()=>`<style>
 :host{display:block;height:355px;overflow:hidden;background:#f4f4f4;white-space:nowrap}
 div{overflow:hidden;padding-left:1px}
 .dark{background:#15151f;height:163px;font-size:6px;line-height:8px;padding:0}
 .dark p{margin:0;height:8px;overflow:hidden}
 </style>
 <div style="height:14px;line-height:14px;background:#fff;color:#999">s-MT5R</div><div style="height:13px;line-height:13px;padding-left:8px">插入</div>
 <div style="height:17px;display:flex;align-items:center;color:#2f77a8;gap:2px">IDE${ICON.bag}</div>
 <div style="height:6px;line-height:6px;font-size:5px;background:#fff">vs US D</div>
 <div style="height:3px;background:#008f90"></div>
 <div style="height:16px;line-height:16px;background:linear-gradient(90deg,#fff 17px,#d22 17px)">0 &nbsp;<small style="font-size:4px">▲</small></div>
 <div style="height:19px;line-height:19px;background:linear-gradient(#d42222,#a80505);color:#fff">570 <span style="font-size:15px">5</span></div>
 <div class="dark"><p style="height:15px;width:17px;background:#6495ed;margin-bottom:5px"></p><p style="height:15px;width:17px;background:#b44cb4;margin-bottom:8px"></p>
 <p style="color:#00b4b4">账户与</p><p style="color:#e08a00;margin-bottom:12px">日收益</p><p style="color:#00b4b4">7 次阵</p><p style="color:#c01414">盈亏: -</p><p style="color:#ddd">: +$0.0</p><p style="color:#ddd;padding-left:4px">--</p><p style="color:#c01414">亏: -$8</p><p style="color:#ddd">盈: 【</p><p style="color:#c01414;margin-bottom:1px">T5自动</p><p style="color:#00b4b4">网格与</p><p style="color:#00c800">层 | 间</p><p style="color:#ddd">/ 空 154</p><p style="color:#ddd">/ 空 454</p></div>
 <div style="height:11px;line-height:9px;font-size:5px;background:#fff;border-bottom:1px solid #999">Mar 00:</div>
 <div style="height:17px;line-height:17px;background:#fff;padding-left:10px;font-size:4px">▲</div>
 <div style="background:#fff">938...</div><div style="background:#eee">947...</div><div style="background:#fff">354...</div>
 <div style="height:18px;line-height:14px;background:#c9c9c9;font-weight:700">SC 净</div><div style="height:16px;line-height:16px;color:#888">史 &nbsp;| &nbsp;新</div>`);

define('task-tip',()=>`<style>:host{display:block;background:#fff;border:1px solid #ddd;color:#666;padding:0 2px;font:7px/9px var(--ui);z-index:5;white-space:nowrap}</style><slot></slot>`);

define('task-bar',()=>{
 const ex=svg(14,14,'<rect x="1" y="1" width="13" height="13" fill="#fee600"/><path d="M3.500 7.500h8" stroke="#6a6000" stroke-dasharray="1.500 .4"/>');
 const app=(i,l,c='')=>`<button class="app ${c}" aria-label="${l}">${i}</button>`;
 return `<style>
 :host{display:flex;background:linear-gradient(90deg,#0b0e10,#0e100f 50%,#12100c);color:#eee;align-items:stretch;font-size:7px;min-width:0}
 button{display:grid;place-items:center;flex:none}
 .start{width:26px}
 label{width:183px;background:#f2f2f2;color:#444;display:flex;align-items:center;padding:0 4px 0 6px;gap:5px}label input{flex:1;width:0;color:#444}label input::placeholder{color:#444;opacity:1}
 .app{width:26px;border-bottom:2px solid transparent}.run{border-bottom-color:#6db2e4}.hot{background:#343a3c}
 .tray{margin-left:auto;display:flex;align-items:center;gap:5px;padding-right:9px;font-size:7px;white-space:nowrap}
 .clock{display:block;text-align:center;font-size:6px;line-height:9px;width:36px}
 .tg{position:relative}.tg span{position:absolute;right:3px;bottom:1px;background:#e23;border-radius:4px;font-size:5px;line-height:7px;padding:0 1px;color:#fff}
 </style>
 <button class="start" aria-label="开始">${svg(10,10,'<path d="M1 2l3.500-.6v3.300H1zM5.200 1.300L9.500.6v4.100H5.200zM1 5.400h3.500v3.400L1 8.200zM5.200 5.400h4.300v4.300L5.200 9z" fill="#fff"/>')}</button>
 <label>${svg(10,10,'<circle cx="6" cy="4" r="3" stroke="#333"/><path d="M4 6.500L1 9.500" stroke="#333"/>')}<input type="search" placeholder="在这里输入你要搜索的内容">${svg(36,16,'<path d="M14 1q1 6 7 7-6 1-7 7-1-6-7-7 6-1 7-7z" fill="#f7b51b"/><path d="M26 6q.5 3 3 3.500-2.500.5-3 3.500-.5-3-3-3.500 2.500-.5 3-3.500z" fill="#f7a42b"/><circle cx="4" cy="12" r="2" fill="#2aa5e0"/><circle cx="23" cy="3" r="1.200" fill="#e0553a"/><circle cx="32" cy="13" r="1.300" fill="#7bbf4a"/>')}</label>
 ${app(svg(12,12,'<path d="M2 1v2h5V1M2 11V9h5v2M2 4.500h5v3H2zM10 1v2M10 5v6" stroke="#eee"/>'),'任务视图')}
 ${app(svg(14,14,'<circle cx="7" cy="7" r="6.300" fill="#1786d2"/><path d="M.8 7C1 3 4 .7 7 .7c4 0 6.500 3 6.300 6-.2 2-2 3-4 2.500-1.300-.4.2-1-.3-2.500C8 4 3 4 .8 7z" fill="#46d2a0"/><path d="M5 8c0 3 3 4.500 6.500 3.500C10 13 8 13.500 6 13 3 12 2.500 9 5 6.500z" fill="#0c4f9e"/>'),'Edge','run')}
 ${app(svg(14,14,'<path d="M1 2h4.500l1 1.500H13V12H1z" fill="#e9a81e"/><path d="M1 5h12v7H1z" fill="#ffd75e"/><path d="M4 12V9h6v3" fill="#3b95d9"/>'),'文件资源管理器','run')}
 ${app(svg(14,14,'<rect x="1" y="3" width="12" height="10" rx="1" fill="#f4f4f4"/><path d="M5 3V1h4v2" stroke="#3fa5dc"/><path d="M4 5h2.500v2.500H4z" fill="#e8502c"/><path d="M7.500 5H10v2.500H7.500z" fill="#7fba00"/><path d="M4 8.500h2.500V11H4z" fill="#00a4ef"/><path d="M7.500 8.500H10V11H7.500z" fill="#ffb900"/>'),'Store')}
 ${app(svg(14,14,'<path d="M1 5l7-4 5 4v8H3l-2-2z" fill="#1f6fd6"/><path d="M4 5l6-2 3 4-6 4-5-3z" fill="#d4ecff"/><path d="M1 7l6 3 6-4v7H1z" fill="#2f8cf0"/>'),'Outlook')}
 ${app(ex,'Exness','run hot')}${app(ex,'Exness','run hot')}
 ${app(svg(14,14,'<rect x=".5" y=".5" width="13" height="13" rx="2.500" fill="#f7f1f1"/><circle cx="7" cy="7" r="4.500" stroke="#8a5a60"/><path d="M9 5H5v4h4M5 7h4" stroke="#8a5a60"/>'),'EBC','run')}
 <button class="app run tg" aria-label="Telegram">${svg(14,14,'<circle cx="6.500" cy="6.500" r="6" fill="#2ca5e0"/><path d="M2.500 6.500l8-3.200-1.300 7-2.500-1.800-1.300 1.200-.3-2z" fill="#fff"/>')}<span>54</span></button>
 ${app(ex,'Exness','run')}
 <div class="tray">${svg(14,14,'<circle cx="5" cy="6" r="4" fill="#f5a623"/><path d="M4 12a2.300 2.300 0 010-4.500 3 3 0 015.500-.5A2.600 2.600 0 0110 12z" fill="#dce8f5"/><circle cx="10" cy="3.500" r="3" fill="#e23c2c"/>')}<span>26°C</span><span>多雲時晴</span>
 <span></span>${svg(8,8,'<path d="M1.500 5.500L4 3l2.500 2.500" stroke="#eee"/>')}${svg(10,10,'<rect x="2.500" y="1.500" width="7" height="5" stroke="#eee"/><path d="M1 4v5h4M6 7v2" stroke="#eee"/>')}${svg(10,10,'<path d="M1 4h1.500L5 2v6L2.500 6H1zM6.500 3.500q1 1.500 0 3M8 2.500q2 2.500 0 5" stroke="#eee" stroke-width=".8"/>')}<span>英</span><span class="clock">17:09<br>2026/3/31</span>${svg(14,14,'<path d="M1 1.500h9v7H5l-2 2v-2H1z" fill="#fff"/><path d="M2.500 3.500h6M2.500 5.500h6" stroke="#222" stroke-width=".8"/><circle cx="9.500" cy="9.500" r="3.800" fill="#333" stroke="#999" stroke-width=".6"/><path d="M8 8h3l-1.500 3.500" stroke="#fff" stroke-width=".8"/>')}</div>`;
});
</script>
</body>
</html>
